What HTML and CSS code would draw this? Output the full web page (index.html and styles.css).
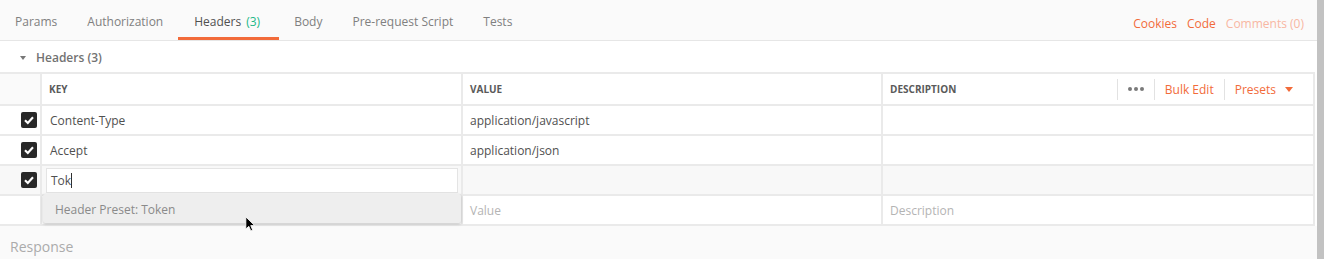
FILE: index.html
```html
<!DOCTYPE html>
<html lang="en">
  <head>
    <meta charset="UTF-8" />
    <title>Headers</title>
    <link rel="stylesheet" href="styles.css">
  </head>
  <body>
    <div class="page">
      <div class="main">
        <nav class="tabs">
          <div class="tab-list">
            <span class="tab">Params</span>
            <span class="tab">Authorization</span>
            <span class="tab active">Headers <span class="count">(3)</span></span>
            <span class="tab">Body</span>
            <span class="tab">Pre-request Script</span>
            <span class="tab">Tests</span>
          </div>
          <div class="tab-links">
            <span class="link">Cookies</span>
            <span class="link">Code</span>
            <span class="link muted">Comments (0)</span>
          </div>
        </nav>

        <section class="headers">
          <div class="section-title">
            <span class="caret"></span>
            Headers (3)
          </div>

          <div class="kv-table">
            <!-- header row -->
            <div class="cell check-cell head"></div>
            <div class="cell label">KEY</div>
            <div class="cell label">VALUE</div>
            <div class="cell label desc-head">
              <span>DESCRIPTION</span>
              <div class="actions">
                <span class="action dots"><i></i><i></i><i></i></span>
                <span class="action link">Bulk Edit</span>
                <span class="action link presets">Presets <span class="tri"></span></span>
              </div>
            </div>

            <!-- row 1 -->
            <div class="cell check-cell"><span class="checkbox"><svg viewBox="0 0 16 16"><path d="M4 8.3 L6.8 11 L12 5.3" /></svg></span></div>
            <div class="cell key">Content-Type</div>
            <div class="cell">application/javascript</div>
            <div class="cell"></div>

            <!-- row 2 -->
            <div class="cell check-cell"><span class="checkbox"><svg viewBox="0 0 16 16"><path d="M4 8.3 L6.8 11 L12 5.3" /></svg></span></div>
            <div class="cell key">Accept</div>
            <div class="cell">application/json</div>
            <div class="cell"></div>

            <!-- row 3, being edited -->
            <div class="cell check-cell editing"><span class="checkbox"><svg viewBox="0 0 16 16"><path d="M4 8.3 L6.8 11 L12 5.3" /></svg></span></div>
            <div class="cell editing key-edit">
              <div class="key-input">Tok<span class="caret-line"></span></div>
              <div class="suggest">
                Header Preset: Token
                <svg class="pointer" viewBox="0 0 12 19"><path d="M1 1 L1 15.5 L4.6 12.3 L7 17.8 L9.2 16.8 L6.9 11.4 L11.6 11.4 Z" /></svg>
              </div>
            </div>
            <div class="cell editing"></div>
            <div class="cell editing"></div>

            <!-- new row (key cell sits under the suggestion list) -->
            <div class="cell check-cell"></div>
            <div class="cell"></div>
            <div class="cell placeholder">Value</div>
            <div class="cell placeholder">Description</div>
          </div>
        </section>

        <div class="response">Response</div>
      </div>
      <div class="scrollbar"></div>
    </div>
  </body>
</html>
```

FILE: styles.css
```css
body {
  margin: 0;
  font-family: "Open Sans", "Liberation Sans", sans-serif;
  font-size: 12px;
  color: #505050;
  background-color: #fafafa;
}

.page {
  display: flex;
  height: 259px;
  overflow: hidden;
}

.main {
  flex: 1;
  display: flex;
  flex-direction: column;
}

.scrollbar {
  width: 7px;
  background-color: #c2c2c2;
}

/* tab bar */
.tabs {
  display: flex;
  justify-content: space-between;
  height: 40px;
  background-color: #fafafa;
  border-bottom: 1px solid #e6e6e6;
}

.tab-list {
  display: flex;
}

.tab {
  display: flex;
  align-items: center;
  box-sizing: border-box;
  height: 40px;
  padding: 6px 15px 0;
  color: #808080;
  border-bottom: 3px solid transparent;
}

.tab.active {
  color: #505050;
  border-bottom-color: #f26b3a;
  padding: 6px 19px 0 16px;
}

.tab .count {
  color: #1db887;
  margin-left: 5px;
}

.tab-links {
  display: flex;
  align-items: center;
  gap: 10px;
  padding: 6px 13px 0 0;
}

.link {
  color: #f26b3a;
}

.link.muted {
  color: #f8b7a2;
}

/* headers section */
.headers {
  background-color: #ffffff;
}

.section-title {
  display: flex;
  align-items: center;
  height: 31px;
  padding: 2px 0 0 20px;
  box-sizing: border-box;
  font-weight: 600;
  color: #727272;
}

.caret {
  width: 0;
  height: 0;
  border-left: 3.5px solid transparent;
  border-right: 3.5px solid transparent;
  border-top: 4px solid #777777;
  margin-right: 10px;
}

.kv-table {
  display: grid;
  grid-template-columns: 40px 419px 418px 1fr;
  grid-template-rows: 30px repeat(4, 28px);
  gap: 2px;
  width: 1315px;
  background-color: #eaeaea;
  border-top: 2px solid #eaeaea;
  border-bottom: 2px solid #eaeaea;
  border-right: 2px solid #eaeaea;
  box-sizing: border-box;
}

.cell {
  display: flex;
  align-items: center;
  padding: 0 7px;
  background-color: #ffffff;
  white-space: nowrap;
}

.cell.key {
  padding-left: 8px;
}

.cell.head {
  background-color: #fafafa;
}

.cell.label {
  font-size: 10px;
  font-weight: 700;
  color: #5a5a5a;
}

.desc-head {
  justify-content: space-between;
  padding-right: 0;
}

.actions {
  display: flex;
  align-items: center;
  font-size: 12px;
  font-weight: 400;
}

.action {
  display: flex;
  align-items: center;
  height: 21px;
  padding: 0 10px;
  border-left: 1px solid #e2e2e2;
}

.action.dots {
  gap: 2px;
}

.action.dots i {
  width: 4px;
  height: 4px;
  border-radius: 50%;
  background-color: #7a7a7a;
}

.action.presets {
  padding-right: 20px;
}

.tri {
  width: 0;
  height: 0;
  border-left: 4px solid transparent;
  border-right: 4px solid transparent;
  border-top: 5px solid #f26b3a;
  margin-left: 9px;
}

.check-cell {
  padding: 0 0 0 21px;
}

.checkbox {
  width: 16px;
  height: 16px;
  border-radius: 2px;
  background-color: #282828;
}

.checkbox svg {
  display: block;
  width: 16px;
  height: 16px;
  fill: none;
  stroke: #ffffff;
  stroke-width: 2.2;
}

.cell.editing {
  background-color: #f8f8f8;
}

.key-edit {
  position: relative;
  padding: 2px 3px 1px 4px;
  align-items: stretch;
}

.key-input {
  flex: 1;
  display: flex;
  align-items: center;
  padding-left: 4px;
  background-color: #ffffff;
  border: 1px solid #e4e4e4;
}

.caret-line {
  width: 1px;
  height: 15px;
  background-color: #303030;
}

.suggest {
  position: absolute;
  top: 28px;
  left: 1px;
  width: 418px;
  height: 29px;
  box-sizing: border-box;
  padding: 1px 0 0 12px;
  display: flex;
  align-items: center;
  background-color: #eeeeee;
  color: #8a8a8a;
  border-radius: 2px;
  box-shadow: 0 1px 3px rgba(0, 0, 0, 0.25);
  z-index: 2;
}

.pointer {
  position: absolute;
  left: 202px;
  top: 22px;
  width: 10px;
  height: 16px;
  fill: #000000;
  stroke: #ffffff;
  stroke-width: 1;
}

.placeholder {
  color: #b4b4b4;
}

.response {
  flex: 1;
  padding: 11px 10px 0;
  font-size: 14px;
  line-height: 20px;
  color: #ababab;
}
```
